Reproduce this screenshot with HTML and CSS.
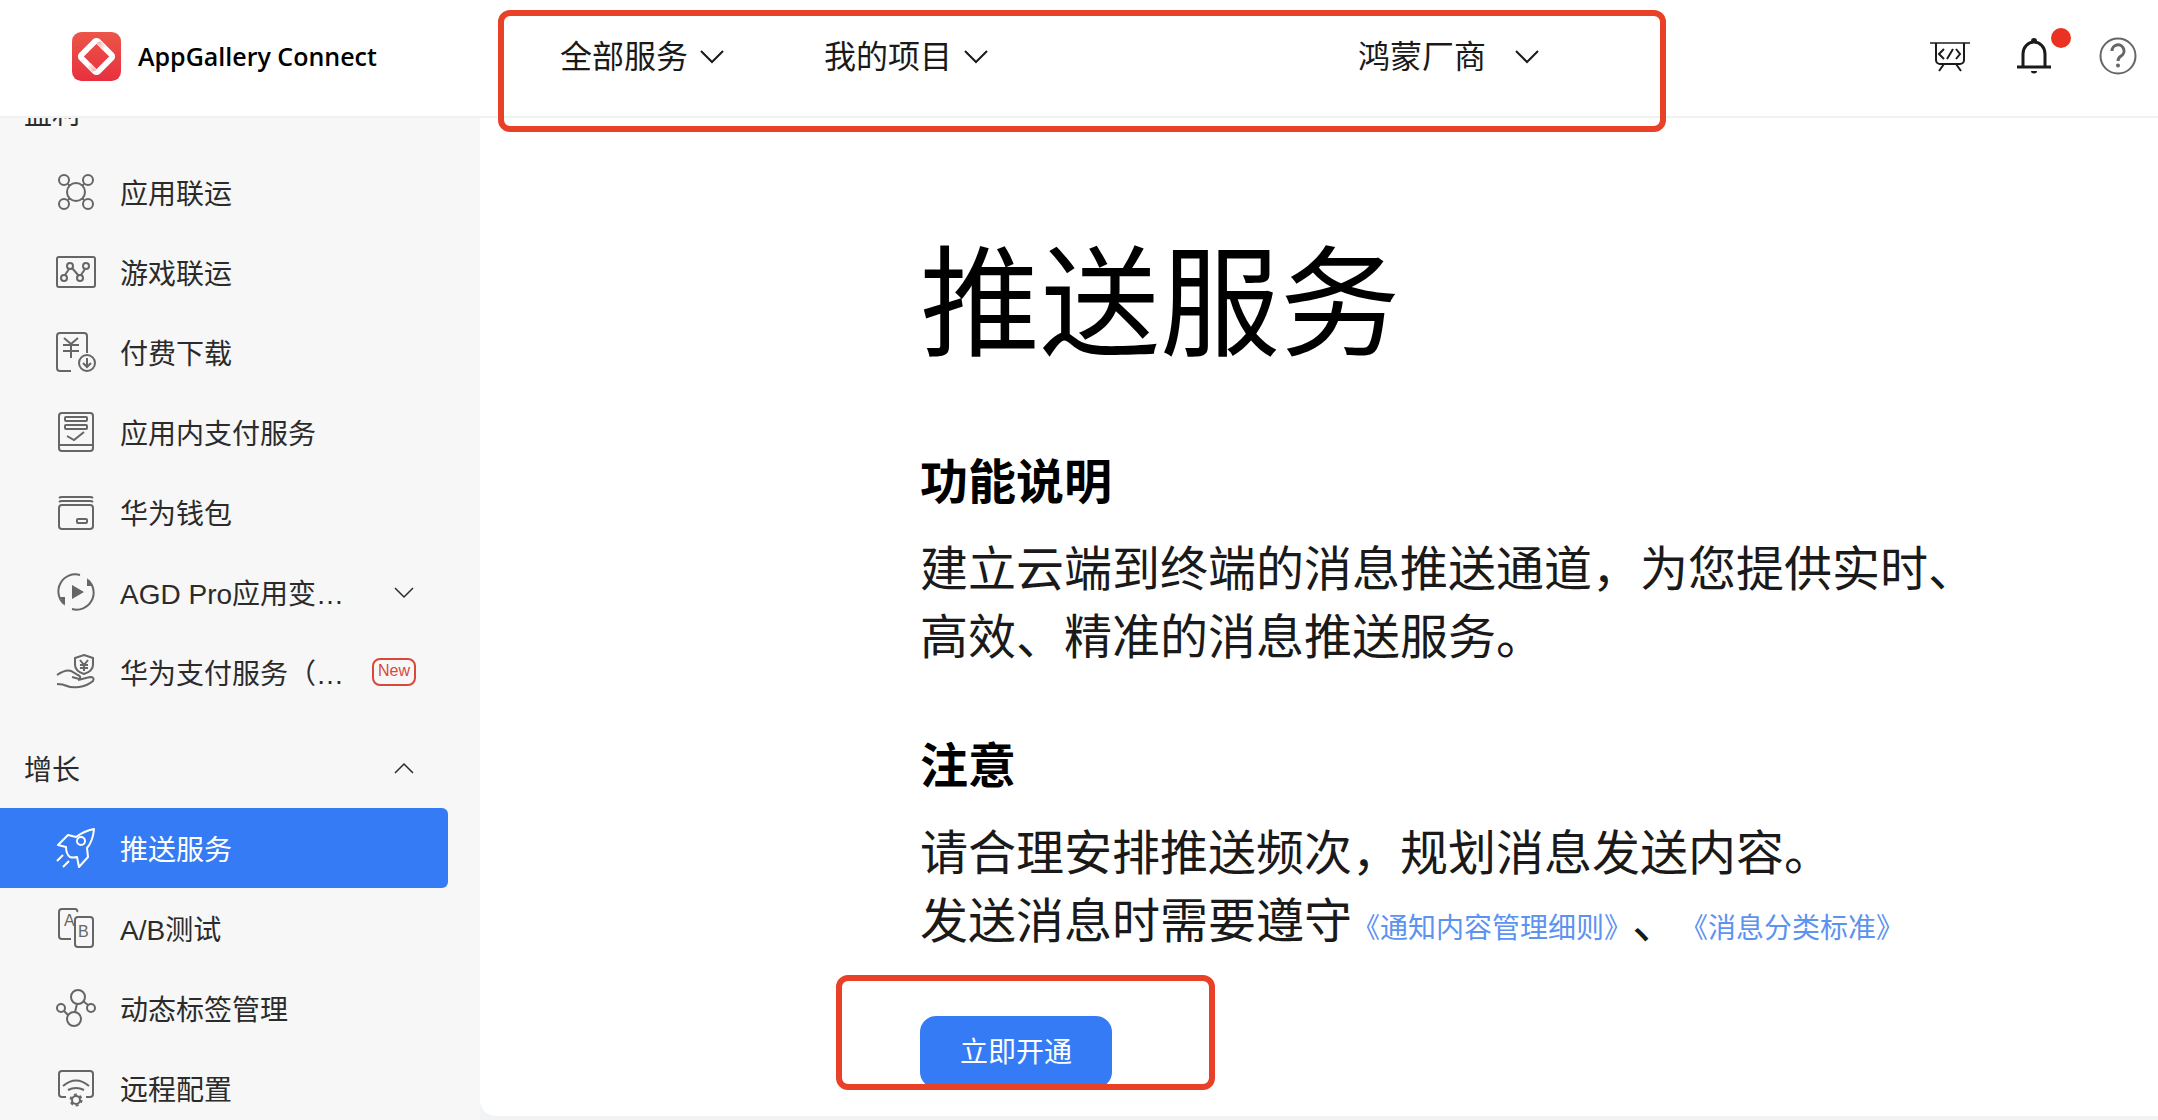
FILE: index.html
```html
<!DOCTYPE html>
<html lang="zh-CN">
<head>
<meta charset="utf-8">
<meta name="viewport" content="width=device-width, initial-scale=1">
<title>推送服务 - AppGallery Connect</title>
<link rel="stylesheet" href="styles.css">
</head>
<body>
<header class="topbar">
  <a class="brand" href="#">
    <svg class="brand-logo" viewBox="0 0 48 48" aria-hidden="true">
      <defs>
        <linearGradient id="brand-bg" x1="0" y1="0" x2="0" y2="1"><stop offset="0" stop-color="#ec5549"/><stop offset="1" stop-color="#e8303f"/></linearGradient>
        <linearGradient id="fold-top" x1="0" y1="0" x2="1" y2="1"><stop offset="0" stop-color="#f3a3a6"/><stop offset="1" stop-color="#fff"/></linearGradient>
        <linearGradient id="fold-bottom" x1="1" y1="1" x2="0" y2="0"><stop offset="0" stop-color="#f3a3a6"/><stop offset="1" stop-color="#fff"/></linearGradient>
      </defs>
      <rect width="48" height="48" rx="9" fill="url(#brand-bg)"/>
      <rect x="12.500" y="12.500" width="23" height="23" rx="2" fill="none" stroke="#fff" stroke-width="5.600" transform="rotate(45 24 24)"/>
      <path d="M24 10.500l4-1.500 5 5-3.500 3.500z" fill="url(#fold-top)"/>
      <path d="M24 37.500l-4 1.500-5-5 3.500-3.500z" fill="url(#fold-bottom)"/>
    </svg>
    <span class="brand-name">AppGallery Connect</span>
  </a>
  <nav class="topnav" aria-label="主导航">
    <button class="topnav-item" type="button">全部服务<svg class="chevron" viewBox="0 0 24 14" aria-hidden="true"><path d="M1 1l11 11L23 1"/></svg></button>
    <button class="topnav-item" type="button">我的项目<svg class="chevron" viewBox="0 0 24 14" aria-hidden="true"><path d="M1 1l11 11L23 1"/></svg></button>
    <button class="topnav-item vendor" type="button">鸿蒙厂商<svg class="chevron" viewBox="0 0 24 14" aria-hidden="true"><path d="M1 1l11 11L23 1"/></svg></button>
  </nav>
  <div class="tools">
    <button class="tool" type="button" aria-label="开发者控制台">
      <svg viewBox="0 0 40 40" aria-hidden="true"><path d="M0 7h40" stroke="#555"/><path d="M6 7v17a4 4 0 0 0 4 4h20a4 4 0 0 0 4-4V7M14 28l-5 7M26 28l5 7M14 13l-5 5 5 5M23 13l-6 10M26 13l4 5-4 5"/></svg>
    </button>
    <button class="tool" type="button" aria-label="通知">
      <svg viewBox="0 0 40 40" aria-hidden="true"><path class="bold" d="M9 31V18a11 12 0 0 1 22 0v13M3 31h34"/><path class="solid" d="M17 5a3 3 0 0 1 6 0zM17 35h6a3 2.500 0 0 1-6 0z"/></svg>
      <span class="dot"></span>
    </button>
    <button class="tool help" type="button" aria-label="帮助">
      <svg viewBox="0 0 40 40" aria-hidden="true"><circle cx="20" cy="20" r="17.500"/><path class="bold" d="M14 15a6 6 0 1 1 9 5q-3 2-3 5"/><circle class="solid" cx="20" cy="29.500" r="2"/></svg>
    </button>
  </div>
</header>

<div class="workspace">
  <aside class="sidebar">
    <nav class="menu" aria-label="服务菜单">
      <button class="group" type="button">盈利</button>
      <ul class="items">
        <li><a class="item" href="#"><svg viewBox="0 0 40 40" aria-hidden="true"><circle cx="20" cy="20" r="9"/><circle cx="8" cy="8" r="5"/><circle cx="32" cy="8" r="5"/><circle cx="8" cy="32" r="5"/><circle cx="32" cy="32" r="5"/><path d="M12 12l2 2M28 12l-2 2M12 28l2-2M28 28l-2-2"/></svg><span>应用联运</span></a></li>
        <li><a class="item" href="#"><svg viewBox="0 0 40 40" aria-hidden="true"><rect x="1" y="5" width="38" height="30" rx="2"/><circle cx="8" cy="26" r="3"/><circle cx="14" cy="14" r="3"/><circle cx="24" cy="26" r="3"/><circle cx="30" cy="14" r="3"/><path d="M9 23l4-6M16 16l7 8M25 23l4-6"/></svg><span>游戏联运</span></a></li>
        <li><a class="item" href="#"><svg viewBox="0 0 40 40" aria-hidden="true"><path d="M15 39H4a3 3 0 0 1-3-3V4a3 3 0 0 1 3-3h24a3 3 0 0 1 3 3v17M8 6l7 6 7-6M7 13h16M7 19h16M15 12v14"/><circle cx="31" cy="31" r="8"/><path d="M31 26v9M27 31l4 4 4-4"/></svg><span>付费下载</span></a></li>
        <li><a class="item" href="#"><svg viewBox="0 0 40 40" aria-hidden="true"><rect x="3" y="1" width="34" height="38" rx="3"/><rect x="9" y="5" width="22" height="4" rx="1"/><rect x="9" y="13" width="22" height="4" rx="1"/><path d="M11 24l7 4 10-8M3 33h34"/></svg><span>应用内支付服务</span></a></li>
        <li><a class="item" href="#"><svg viewBox="0 0 40 40" aria-hidden="true"><path d="M3 6q1-1 3-1h28q2 0 3 1M3 10q1-1 3-1h28q2 0 3 1"/><rect x="3" y="13" width="34" height="24" rx="3"/><rect x="21" y="27" width="10" height="4" rx="1"/></svg><span>华为钱包</span></a></li>
        <li><a class="item" href="#"><svg viewBox="0 0 40 40" aria-hidden="true"><path d="M24 3A17 17 0 0 0 8 32M32 8A17 17 0 0 1 16 37"/><path class="solid" d="M16 13l12 7-12 7zM4 25h5v9zM31 6l5 8h-5z"/></svg><span>AGD Pro应用变…</span><svg class="chevron small" viewBox="0 0 24 14" aria-hidden="true"><path d="M3 3l9 9 9-9"/></svg></a></li>
        <li><a class="item" href="#"><svg viewBox="0 0 40 40" aria-hidden="true"><path d="M28 3l9 3v7q0 6-9 9-9-3-9-9V6zM24 8l4 5 4-5M28 13v6M24 13h8M24 16h8M1 23q9-6 14-4l7 4q4 2 1 4l-7-2M1 32q6 0 10 2t12 1q8-1 14-6 2-4-3-4L22 28"/></svg><span>华为支付服务（…</span><em class="badge">New</em></a></li>
      </ul>
      <button class="group spaced" type="button">增长<svg class="chevron small" viewBox="0 0 24 14" aria-hidden="true"><path d="M3 12l9-9 9 9"/></svg></button>
      <ul class="items">
        <li><a class="item active" href="#" aria-current="page"><svg viewBox="0 0 40 40" aria-hidden="true"><path stroke-linejoin="round" d="M38 1Q28 3 20 9L12 7 2 17l8 2q0 7 4 10 3 1 7 0l2 10 9-10-1-9Q37 13 38 1z"/><circle cx="25" cy="13" r="4"/><path d="M7 27l-6 6M13 33l-6 6"/></svg><span>推送服务</span></a></li>
        <li><a class="item" href="#"><svg viewBox="0 0 40 40" aria-hidden="true"><path d="M15 31H6a3 3 0 0 1-3-3V4a3 3 0 0 1 3-3h13a2 2 0 0 1 2 3"/><rect x="19" y="9" width="18" height="30" rx="3"/><text x="8" y="18">A</text><text x="22" y="29">B</text></svg><span>A/B测试</span></a></li>
        <li><a class="item" href="#"><svg viewBox="0 0 40 40" aria-hidden="true"><circle cx="22" cy="9" r="7"/><circle cx="18" cy="31" r="7"/><circle cx="5" cy="20" r="4"/><circle cx="35" cy="20" r="4"/><path d="M21 16l-2 8M8 23l4 4M32 17l-5-4"/></svg><span>动态标签管理</span></a></li>
        <li><a class="item" href="#"><svg viewBox="0 0 40 40" aria-hidden="true"><path d="M10 29H6a3 3 0 0 1-3-3V6a3 3 0 0 1 3-3h28a3 3 0 0 1 3 3v20a3 3 0 0 1-3 3h-4M7 18q13-11 26 0M12 22q8-4 16 0"/><circle cx="20" cy="32" r="4"/><circle cx="20" cy="32" r="5.500" stroke-dasharray="2.900"/></svg><span>远程配置</span></a></li>
      </ul>
    </nav>
  </aside>

  <main class="content">
    <article class="intro">
      <h1>推送服务</h1>
      <section>
        <h2>功能说明</h2>
        <p>建立云端到终端的消息推送通道，为您提供实时、高效、精准的消息推送服务。</p>
      </section>
      <section>
        <h2>注意</h2>
        <p>请合理安排推送频次，规划消息发送内容。<br>发送消息时需要遵守<a href="#">《通知内容管理细则》</a>、<a href="#">《消息分类标准》</a></p>
      </section>
      <div class="action">
        <button class="primary" type="button">立即开通</button>
        <span class="mark mark-action"></span>
      </div>
    </article>
  </main>
</div>
<span class="mark mark-nav"></span>
</body>
</html>
```
FILE: styles.css
```css
* {
  box-sizing: border-box;
}

body {
  display: flex;
  flex-direction: column;
  height: 100vh;
  margin: 0;
  overflow: hidden;
  background: #f1f3f5;
  color: #1a1a1a;
  font-family: "Liberation Sans", "Noto Sans CJK SC", sans-serif;
  font-size: 28px;
  text-spacing-trim: space-all;
}

button {
  padding: 0;
  border: 0;
  background: none;
  color: inherit;
  font: inherit;
  cursor: pointer;
}

a {
  color: inherit;
  text-decoration: none;
}

svg {
  flex: none;
  fill: none;
  stroke: currentColor;
  stroke-width: 2;
}

svg .solid {
  fill: currentColor;
  stroke: none;
}

svg .bold {
  stroke-width: 3;
}

svg text {
  fill: currentColor;
  stroke: none;
  font-size: 16px;
}

/* Top bar */
.topbar {
  position: relative;
  z-index: 1;
  display: flex;
  flex: none;
  align-items: center;
  height: 118px;
  padding: 0 20px 4px 72px;
  border-bottom: 2px solid #f1f1f1;
  background: #fff;
}

.brand {
  display: flex;
  align-items: center;
  gap: 17px;
  width: 488px;
  color: #000;
}

.brand-logo {
  width: 49px;
  height: 49px;
  stroke: none;
}

.brand-name {
  font: 600 25px/40px "Open Sans", sans-serif;
}

.topnav {
  display: flex;
  flex: 1;
  gap: 100px;
  padding-top: 2px;
}

.topnav-item {
  display: flex;
  align-items: center;
  gap: 12px;
  font-size: 32px;
  line-height: 48px;
}

.topnav-item.vendor {
  gap: 29px;
  margin-left: 270px;
}

.chevron {
  width: 24px;
  height: 14px;
}

.chevron.small {
  stroke-width: 1.5;
}

.tools {
  display: flex;
  gap: 44px;
}

.tool {
  position: relative;
  display: flex;
}

.tool svg {
  width: 40px;
  height: 40px;
}

.tool.help {
  color: #666;
}

.dot {
  position: absolute;
  top: -8px;
  right: -17px;
  width: 20px;
  height: 20px;
  border-radius: 50%;
  background: #ea3223;
}

/* Layout */
.workspace {
  display: flex;
  flex: 1;
  min-height: 0;
}

.sidebar {
  flex: none;
  width: 480px;
  overflow: hidden;
  background: #f7f7f7;
  color: #2b2b2b;
}

.menu {
  width: 448px;
  margin-top: -46px;
}

.group {
  display: flex;
  align-items: center;
  justify-content: space-between;
  width: 100%;
  height: 80px;
  padding: 0 32px 0 24px;
}

.group.spaced {
  margin-top: 16px;
}

.items {
  margin: 0;
  padding: 0;
  list-style: none;
}

.item {
  display: flex;
  align-items: center;
  gap: 24px;
  height: 80px;
  padding: 0 32px 0 56px;
  white-space: nowrap;
}

.item svg:first-child {
  width: 40px;
  height: 40px;
  color: #666;
}

.item .chevron,
.badge {
  margin-left: auto;
}

.item.active,
.item.active svg:first-child {
  color: #fff;
}

.item.active {
  border-radius: 0 6px 6px 0;
  background: #357bf6;
}

.badge {
  width: 44px;
  height: 28px;
  border: 2px solid #d9483b;
  border-radius: 8px;
  color: #d9483b;
  font-size: 16px;
  font-style: normal;
  line-height: 22px;
  text-align: center;
}

.content {
  flex: 1;
  margin-bottom: 4px;
  padding: 127px 180px 0 440px;
  border-bottom-left-radius: 16px;
  background: #fff;
}

/* Service introduction */
.intro {
  max-width: 1060px;
}

h1,
h2,
p {
  margin: 0;
}

h1 {
  margin-bottom: 86px;
  color: #000;
  font-size: 120px;
  font-weight: 400;
  line-height: 120px;
}

h2 {
  margin-bottom: 21px;
  color: #000;
  font-size: 48px;
  line-height: 64px;
}

section + section {
  margin-top: 63px;
}

p {
  font-size: 48px;
  line-height: 68px;
}

p a {
  color: #5c92f0;
  font-size: 28px;
  line-height: 40px;
}

.action {
  position: relative;
  margin-top: 60px;
}

.primary {
  display: block;
  width: 192px;
  height: 72px;
  padding-bottom: 4px;
  border-radius: 16px;
  background: #357bf6;
  color: #fff;
}

/* Highlight frames laid over the page */
.mark {
  position: absolute;
  border: 6px solid #e84128;
  border-radius: 12px;
  pointer-events: none;
}

.mark-nav {
  z-index: 2;
  top: 10px;
  left: 498px;
  width: 1168px;
  height: 122px;
}

.mark-action {
  top: -41px;
  left: -84px;
  width: 379px;
  height: 115px;
}
```
